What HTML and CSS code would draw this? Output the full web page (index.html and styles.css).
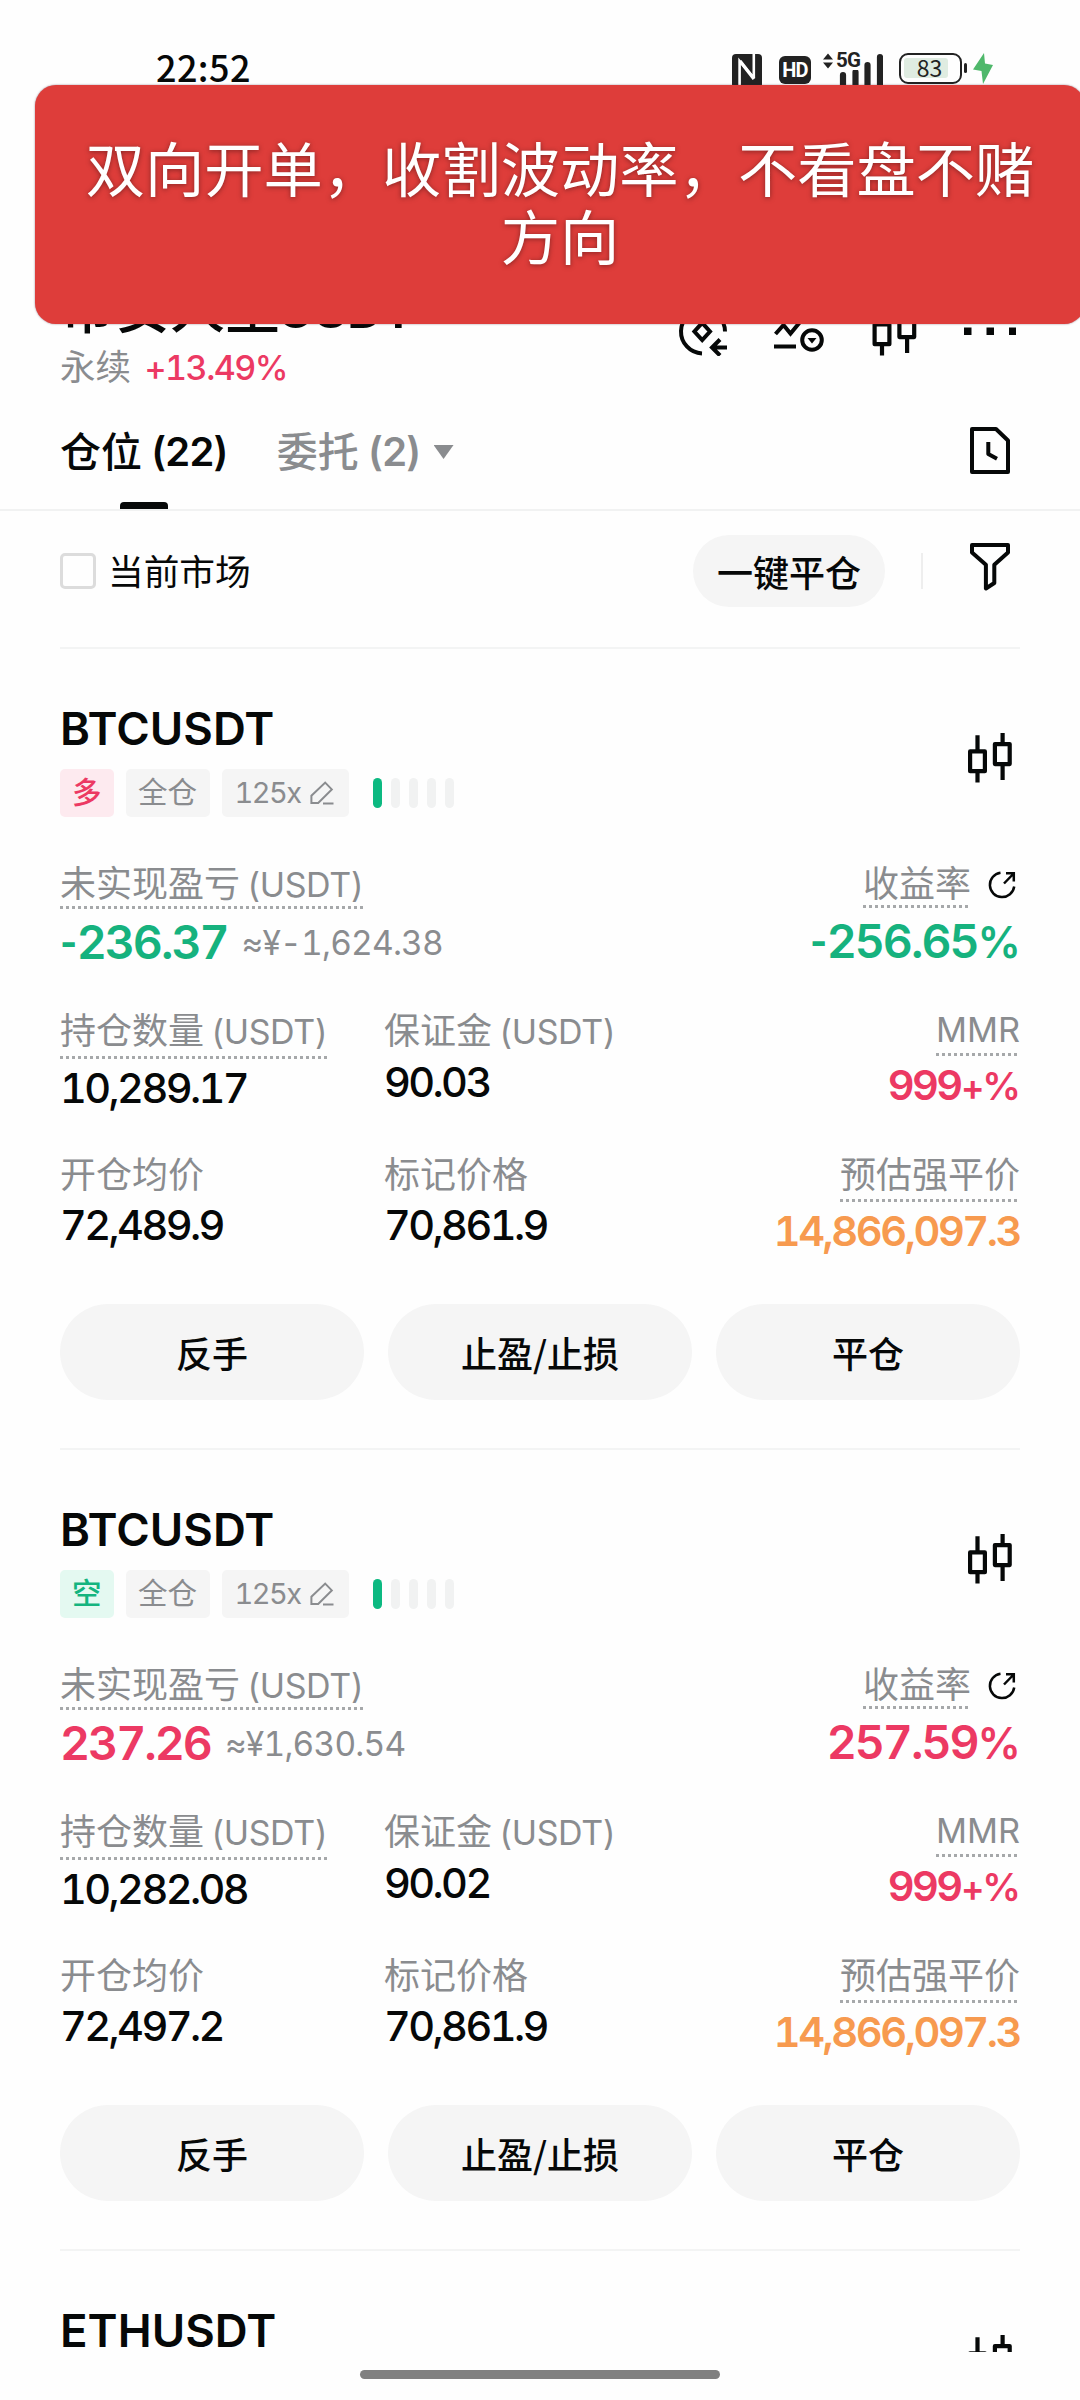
FILE: index.html
```html
<!DOCTYPE html>
<html lang="zh-CN">
<head>
<meta charset="utf-8">
<title>仓位</title>
<link rel="stylesheet" href="styles.css">
</head>
<body>
<svg class="defs" width="0" height="0">
  <symbol id="candles" viewBox="0 0 44 50">
    <g fill="none" stroke="#060808" stroke-width="4.2" stroke-linejoin="round">
      <rect x="2.1" y="18.4" width="14.8" height="19.8"/>
      <path d="M9.5 2.3V18M9.5 38.5V49.4"/>
      <rect x="26.9" y="11.1" width="14.8" height="20"/>
      <path d="M34.6 0V11M34.6 31V47"/>
    </g>
  </symbol>
  <symbol id="share" viewBox="0 0 28 28">
    <g fill="none" stroke="#060808" stroke-width="2.5">
      <path d="M12.5 1.8A12.2 12.2 0 1 0 26.2 15.5"/>
      <path d="M16 12.5L25.2 3M18 2.2H25.8V10.5"/>
    </g>
  </symbol>
  <symbol id="pencil" viewBox="0 0 24 24">
    <path d="M15.2 1.6L21.8 8.4L8.2 22H1.4V14.8ZM13 22.4H23.5" fill="none" stroke="#8a8c8f" stroke-width="2"/>
  </symbol>
</svg>

<div class="screen">
  <div class="status">
    <span class="clock">22:52</span>
    <div class="status-icons">
      <svg class="nfc" viewBox="0 0 30 32"><rect width="30" height="34" rx="4" fill="#222"/><path d="M7.6 32V7L21.8 24M21.8 0V24" fill="none" stroke="#fff" stroke-width="2.6"/><path d="M8 7L22 25" stroke="#fff" stroke-width="3.4"/></svg>
      <span class="hd">HD</span>
      <span class="signal">
        <svg viewBox="0 0 60 32" width="60" height="32"><path d="M0 6.5L5 .5L10 6.5ZM0 9.5L5 15.5L10 9.5Z" fill="#222"/><path d="M20 22V34M32.5 19V34M44.5 12V34M57 4V34" stroke="#222" stroke-width="6.2" stroke-linecap="round"/></svg>
        <b class="net">5G</b>
      </span>
      <span class="battery"><span class="level"></span><span class="percent">83</span></span>
      <svg class="bolt" viewBox="0 0 20 31"><path d="M11 0L0 16.5L8.5 18L10 31L20 12L12 10.5Z" fill="#4fb86b"/></svg>
    </div>
  </div>

  <header class="header">
    <div class="pair">
      <div class="pair-name">币安人生<span class="latin">USDT</span></div>
      <div class="pair-sub">永续 <span class="chg">+13.49%</span></div>
    </div>
    <div class="header-icons">
      <svg width="50" height="50" viewBox="0 0 50 50"><g fill="none" stroke="#060808" stroke-width="4"><path d="M24 47.5A22 22 0 1 1 47 25.5"/><path d="M24.2 16.8L32 25.5L24.2 34L16.4 25.5Z"/><path d="M49 41.5H34M42 33.5L34 41.5L42 49.5"/></g></svg>
      <svg width="50" height="50" viewBox="0 0 50 50"><g fill="none" stroke="#060808" stroke-width="4"><path d="M1.5 28L9.5 19L16.5 27.5L31 10"/><path d="M0 40.5H22"/><circle cx="38" cy="34" r="9.8"/></g><path d="M33.5 32H42.5L38 37.5Z" fill="#060808"/></svg>
      <svg width="45" height="50"><use href="#candles"/></svg>
      <svg width="52" height="50" viewBox="0 0 52 50"><path d="M0 21.5H7.5V29H0ZM22.5 21.5H30V29H22.5ZM45 21.5H52V29H45Z" fill="#060808"/></svg>
    </div>
  </header>

  <nav class="tabs">
    <div class="tab active"><span class="cjk">仓位</span><span class="count">(22)</span></div>
    <div class="tab"><span class="cjk">委托</span><span class="count">(2)</span><span class="caret"></span></div>
    <svg class="doc" width="40" height="47" viewBox="0 0 40 47"><g fill="none" stroke="#060808" stroke-width="4" stroke-linejoin="round"><path d="M2 2H26L38 13.5V45H2Z"/><path d="M18.3 15V27L27 31.7"/></g></svg>
  </nav>

  <div class="filter">
    <span class="box"></span>
    <span class="market">当前市场</span>
    <button class="close-all">一键平仓</button>
    <span class="vline"></span>
    <svg width="40" height="48" viewBox="0 0 40 48"><path d="M2 2H38V9.5L24.3 21.8V40L15.9 45.5V21.8L2 9.5Z" fill="none" stroke="#060808" stroke-width="4" stroke-linejoin="round"/></svg>
  </div>

  <main class="list">
    <section class="card">
      <div class="head">
        <h2 class="symbol">BTCUSDT</h2>
        <svg class="chart" width="44" height="50"><use href="#candles"/></svg>
      </div>
      <div class="tags">
        <span class="tag long">多</span><span class="tag">全仓</span><span class="tag lever">125x<svg width="24" height="24"><use href="#pencil"/></svg></span>
        <span class="meter"><i class="on"></i><i></i><i></i><i></i><i></i></span>
      </div>
      <div class="pnl">
        <div>
          <div class="label dotted">未实现盈亏<span class="unit">(USDT)</span></div>
          <div class="big down"><span class="sign">-</span>236.37<span class="fiat">≈¥-1,624.38</span></div>
        </div>
        <div class="right">
          <div class="roi"><span class="label dotted">收益率</span><svg width="28" height="28"><use href="#share"/></svg></div>
          <div class="big down"><span class="sign">-</span>256.65<span class="pct">%</span></div>
        </div>
      </div>
      <div class="stats">
        <div><div class="label dotted">持仓数量<span class="unit">(USDT)</span></div><div class="value">10,289.17</div></div>
        <div><div class="label">保证金<span class="unit">(USDT)</span></div><div class="value">90.03</div></div>
        <div class="right"><div class="label dotted mmr">MMR</div><div class="value up">999<span class="plus">+</span><span class="pct">%</span></div></div>
      </div>
      <div class="stats prices">
        <div><div class="label">开仓均价</div><div class="value">72,489.9</div></div>
        <div><div class="label">标记价格</div><div class="value">70,861.9</div></div>
        <div class="right"><div class="label dotted">预估强平价</div><div class="value liq">14,866,097.3</div></div>
      </div>
      <div class="actions"><button>反手</button><button>止盈/止损</button><button>平仓</button></div>
    </section>

    <section class="card">
      <div class="head">
        <h2 class="symbol">BTCUSDT</h2>
        <svg class="chart" width="44" height="50"><use href="#candles"/></svg>
      </div>
      <div class="tags">
        <span class="tag short">空</span><span class="tag">全仓</span><span class="tag lever">125x<svg width="24" height="24"><use href="#pencil"/></svg></span>
        <span class="meter"><i class="on"></i><i></i><i></i><i></i><i></i></span>
      </div>
      <div class="pnl">
        <div>
          <div class="label dotted">未实现盈亏<span class="unit">(USDT)</span></div>
          <div class="big up">237.26<span class="fiat">≈¥1,630.54</span></div>
        </div>
        <div class="right">
          <div class="roi"><span class="label dotted">收益率</span><svg width="28" height="28"><use href="#share"/></svg></div>
          <div class="big up">257.59<span class="pct">%</span></div>
        </div>
      </div>
      <div class="stats">
        <div><div class="label dotted">持仓数量<span class="unit">(USDT)</span></div><div class="value">10,282.08</div></div>
        <div><div class="label">保证金<span class="unit">(USDT)</span></div><div class="value">90.02</div></div>
        <div class="right"><div class="label dotted mmr">MMR</div><div class="value up">999<span class="plus">+</span><span class="pct">%</span></div></div>
      </div>
      <div class="stats prices">
        <div><div class="label">开仓均价</div><div class="value">72,497.2</div></div>
        <div><div class="label">标记价格</div><div class="value">70,861.9</div></div>
        <div class="right"><div class="label dotted">预估强平价</div><div class="value liq">14,866,097.3</div></div>
      </div>
      <div class="actions"><button>反手</button><button>止盈/止损</button><button>平仓</button></div>
    </section>

    <section class="card">
      <div class="head">
        <h2 class="symbol">ETHUSDT</h2>
        <svg class="chart" width="44" height="50"><use href="#candles"/></svg>
      </div>
    </section>
  </main>

  <div class="banner">双向开单，收割波动率，不看盘不赌<br>方向</div>
  <div class="home-bar"></div>
</div>
</body>
</html>
```
FILE: styles.css
```css
* { box-sizing: border-box; }
body { margin: 0; background: #fefefe; }
.defs { position: absolute; }
.screen {
  position: relative;
  width: 1080px;
  height: 2400px;
  overflow: hidden;
  background: #fefefe;
  color: #060808;
  font-family: Inter, "Noto Sans CJK SC", sans-serif;
  font-feature-settings: "tnum";
  display: flex;
  flex-direction: column;
}
svg { display: block; flex: none; }
button {
  border: 0;
  padding: 0;
  background: #f5f5f5;
  color: #060808;
  font: 500 36px/50px "Noto Sans CJK SC", sans-serif;
}

/* status bar */
.status {
  height: 86px;
  padding: 53px 87px 0 156px;
  display: flex;
  justify-content: space-between;
  align-items: flex-start;
  flex: none;
}
.clock { font: 500 36px/32px "Noto Sans CJK SC", sans-serif; letter-spacing: .4px; margin-top: -3px; }
.status-icons { display: flex; align-items: flex-start; }
.nfc { width: 30px; height: 32px; margin: 1px 17px 0 0; }
.hd {
  width: 32px; height: 28px; margin: 3px 12px 0 0;
  border-radius: 6px; background: #222; color: #fff;
  font: 700 20px/29px Roboto, sans-serif; text-align: center; letter-spacing: -.8px;
}
.signal { position: relative; width: 60px; height: 32px; margin-right: 16px; }
.net { position: absolute; left: 13px; top: -3px; background: #fefefe; font: 700 20.5px/20px Roboto, sans-serif; color: #222; letter-spacing: -.8px; }
.battery {
  position: relative; width: 63px; height: 31px; margin-right: 11px;
  border: 2.5px solid #222; border-radius: 9px; padding: 3px;
}
.battery::after { content: ""; position: absolute; right: -7px; top: 8px; width: 3px; height: 10px; background: #222; border-radius: 2px; }
.level { display: block; width: 44px; height: 20px; border-radius: 3px; background: #dfece1; }
.percent { position: absolute; left: 0; width: 57px; top: -1px; font: 400 23px/26px "Noto Sans CJK SC", sans-serif; text-align: center; color: #222; }
.bolt { width: 20px; height: 31px; }

/* header */
.header {
  height: 314px;
  margin-bottom: -6px;
  padding: 189px 64px 0 60px;
  display: flex;
  justify-content: space-between;
  flex: none;
}
.pair-name { font-size: 55px; line-height: 66px; font-weight: 500; }
.pair-name .latin { font-size: 51px; font-weight: 600; letter-spacing: -.5px; margin-left: -3px; }
.pair-sub { margin-top: 4px; font-size: 35.5px; line-height: 42px; color: #8a8c8f; white-space: nowrap; }
.chg { font-size: 34px; font-weight: 500; color: #ec3963; letter-spacing: -1.5px; margin-left: 4px; }
.header-icons { display: flex; margin-top: 31px; }
.header-icons svg:nth-child(1) { margin-right: 46px; }
.header-icons svg:nth-child(2) { margin-right: 48px; }
.header-icons svg:nth-child(3) { margin-right: 47px; }

/* tabs */
.tabs {
  height: 117px;
  padding: 24px 70px 0 60px;
  display: flex;
  gap: 50px;
  border-bottom: 2px solid #f1f2f2;
  flex: none;
}
.tab { position: relative; display: flex; height: 91px; line-height: 68px; font-size: 41px; font-weight: 500; color: #8a8c8f; }
.tab .count { font-size: 40px; font-weight: 600; letter-spacing: -1.8px; margin-left: 9px; }
.tab.active { color: #060808; }
.tab.active::after {
  content: ""; position: absolute; left: 60px; bottom: 0; width: 48px; height: 7px;
  background: #060808; border-radius: 4px 4px 0 0;
}
.caret { width: 20px; height: 14px; margin: 27px 0 0 14px; background: #8a8c8f; clip-path: polygon(0 0, 100% 0, 50% 100%); }
.doc { margin: 9px 0 0 auto; }

/* filter row */
.filter {
  height: 138px;
  margin: 0 60px;
  padding: 0 10px 16px 0;
  display: flex;
  align-items: center;
  border-bottom: 2px solid #f3f4f4;
  flex: none;
}
.box { width: 36px; height: 36px; border: 3px solid #dcdcdc; border-radius: 5px; }
.market { margin: -2px 0 0 12px; font: 400 35.7px/50px "Noto Sans CJK SC", sans-serif; }
.close-all { width: 192px; height: 72px; border-radius: 36px; margin-left: auto; padding-bottom: 1px; }
.vline { width: 2px; height: 36px; background: #eee; margin: 0 47px 0 36px; }
.filter svg { margin-top: -9px; }

/* positions */
.list { height: 1703px; margin: 0 60px; overflow: hidden; flex: none; }
.card { height: 801px; padding-top: 54.5px; border-bottom: 2px solid #f3f4f4; }
.head { display: flex; justify-content: space-between; height: 65px; padding-right: 8px; }
.symbol { margin: 0; font-size: 45.5px; line-height: 50px; font-weight: 600; letter-spacing: .05px; }
.chart { margin-top: 29px; }
.tags { display: flex; height: 48px; gap: 12px; }
.tag {
  height: 48px; padding: 0 12.5px; border-radius: 5px; background: #f5f5f5; color: #8a8c8f;
  font-size: 29.5px; line-height: 47px; display: flex; align-items: center;
}
.tag.long { background: #fdeaef; color: #ec3963; font-weight: 500; padding: 0 12px; }
.tag.short { background: #e4f9f1; color: #14b47f; font-weight: 500; padding: 0 12px; }
.lever { width: 127px; font-size: 29px; letter-spacing: -1.6px; justify-content: space-between; padding: 0 15px 0 13px; }
.meter { display: flex; gap: 9px; align-items: center; margin-left: 12px; }
.meter i { width: 9px; height: 30px; border-radius: 5px; background: #f1f2f2; }
.meter .on { background: #0cb981; }

.label {
  display: table; height: 42px; line-height: 42px; font-size: 36px; color: #8a8c8f; white-space: nowrap;
  font-weight: 400;
}
.unit { font-size: 34px; letter-spacing: -.45px; margin-left: 7px; }
.dotted {
  padding-bottom: 3px; box-sizing: content-box;
  background: repeating-linear-gradient(90deg, #a6a8aa 0 3px, transparent 3px 6px) left bottom / 100% 3px no-repeat;
}
.right { display: flex; flex-direction: column; align-items: flex-end; }
.pnl { display: flex; justify-content: space-between; margin-top: 46.5px; height: 144px; }
.roi { display: flex; padding-right: 4px; gap: 17px; }
.roi svg { margin-top: 8px; }
.big { margin-top: 8px; font-size: 46.5px; line-height: 50px; font-weight: 600; letter-spacing: -2px; white-space: nowrap; }
.sign { display: inline-block; font-feature-settings: normal; transform: scaleX(.8); transform-origin: right; margin: 0 1px 0 -4px; }
.pct { font-size: .93em; letter-spacing: -1px; }
.plus { font-size: .86em; font-feature-settings: normal; }
.fiat { font-size: 33.5px; font-weight: 400; color: #8a8c8f; letter-spacing: -.8px; margin-left: 14px; position: relative; top: -4.5px; }
.up { color: #ec3963; }
.down { color: #16b27e; }
.liq { color: #f79a4f; }

.stats { display: grid; grid-template-columns: 324px 1fr auto; height: 144px; }
.stats .label { height: 48px; line-height: 48px; }
.stats .mmr { height: 45px; line-height: 46px; font-size: 34.3px; }
.value { margin-top: 5px; font-size: 41.5px; line-height: 42px; font-weight: 500; letter-spacing: -2.6px; white-space: nowrap; }
.dotted + .value { margin-top: 7.5px; }
.value.up, .value.liq { font-weight: 600; letter-spacing: -2.5px; }
.value .pct { letter-spacing: -1px; }
.value.liq { letter-spacing: -2.4px; }
.prices { height: 152.5px; }

.actions { display: grid; grid-template-columns: repeat(3, 1fr); gap: 24px; }
.actions button { height: 96px; border-radius: 48px; }

/* overlays */
.banner {
  position: absolute; left: 35px; top: 85px; width: 1050px; height: 239px;
  border-radius: 21px; background: #de3d3a; box-shadow: 0 0 2px rgba(80, 40, 60, .6);
  padding-top: 47px; text-align: center; color: #fff;
  font: 400 59.3px/68px "Noto Sans CJK SC", sans-serif;
  text-shadow: 0 1px 5px rgba(70, 20, 20, .6);
  white-space: nowrap;
}
.home-bar { position: absolute; left: 360px; top: 2370px; width: 360px; height: 9px; border-radius: 5px; background: #808080; }
```
